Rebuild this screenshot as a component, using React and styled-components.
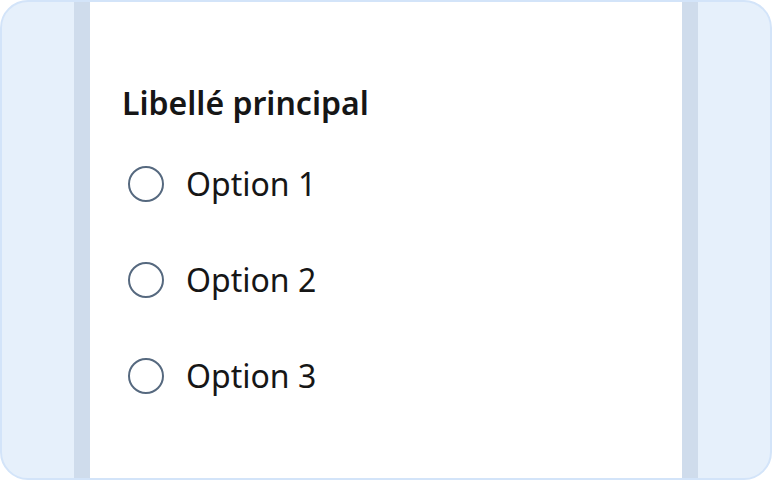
import React from 'react';
import styled, { createGlobalStyle } from 'styled-components';

const GlobalStyle = createGlobalStyle`
  html, body {
    margin: 0;
    padding: 0;
    background: #ffffff;
  }
  body {
    font-family: 'Noto Sans', 'Open Sans', sans-serif;
  }
`;

const options = ['Option 1', 'Option 2', 'Option 3'];

const App = () => {
  return (
    <>
      <GlobalStyle />
      <Frame>
        <Gutter />
        <Stripe />
        <Panel>
          <Fieldset>
            <Legend>Libellé principal</Legend>
            {options.map((opt) => (
              <Option key={opt}>
                <Radio type="radio" name="choix" />
                <OptionText>{opt}</OptionText>
              </Option>
            ))}
          </Fieldset>
        </Panel>
        <Stripe />
        <Gutter $grow />
      </Frame>
    </>
  );
};

export default App;

const Frame = styled.div`
  box-sizing: border-box;
  width: 772px;
  height: 480px;
  border: 2px solid #d3e4f9;
  border-radius: 28px;
  background: #e6f0fb;
  overflow: hidden;
  display: flex;
`;

const Gutter = styled.div`
  width: 72px;
  flex: ${({ $grow }) => ($grow ? '1' : 'none')};
`;

const Stripe = styled.div`
  width: 16px;
  background: #cfdcec;
`;

const Panel = styled.div`
  width: 592px;
  background: #ffffff;
  padding: 81px 0 0 32px;
  box-sizing: border-box;
`;

const Fieldset = styled.div`
  display: flex;
  flex-direction: column;
`;

const Legend = styled.div`
  font-size: 32px;
  font-weight: 600;
  color: #161616;
  line-height: 40px;
  margin-bottom: 39px;
`;

const Option = styled.label`
  display: flex;
  align-items: center;
  gap: 22px;
  height: 44px;
  margin-bottom: 52px;
  padding-left: 6px;
`;

const Radio = styled.input`
  appearance: none;
  margin: 0;
  width: 36px;
  height: 36px;
  border: 2px solid #56697f;
  border-radius: 50%;
  box-sizing: border-box;
  background: #ffffff;
`;

const OptionText = styled.span`
  font-size: 32px;
  line-height: 40px;
  color: #161616;
`;
